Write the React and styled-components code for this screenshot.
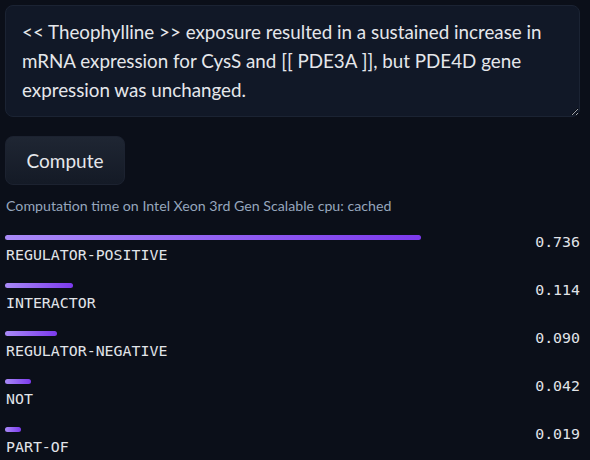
import React from 'react';
import styled, { createGlobalStyle } from 'styled-components';

const GlobalStyle = createGlobalStyle`
  html, body {
    margin: 0;
    padding: 0;
    background: #0b0f19;
  }
  * { box-sizing: border-box; }
`

const Page = styled.div`
  width: 590px;
  height: 460px;
  overflow: hidden;
  padding: 5px 10px 0 5px;
  display: flex;
  flex-direction: column;
  font-family: "Lato", "Noto Sans", sans-serif;
  & > * { flex-shrink: 0; }
`

const TextBox = styled.textarea`
  width: 575px;
  height: 112px;
  background: #111827;
  border: 1px solid #1b2333;
  border-radius: 8px;
  color: #e5e7eb;
  font-family: "Lato", "Noto Sans", sans-serif;
  font-size: 18.8px;
  line-height: 29px;
  padding: 11px 16px;
  outline: none;
  resize: vertical;
`

const ComputeBtn = styled.button`
  margin-top: 19px;
  width: 120px;
  height: 49px;
  border-radius: 8px;
  border: 1px solid #1c2230;
  background: linear-gradient(to bottom, #1f2633, #141a26);
  color: #e5e7eb;
  font-family: "Lato", "Noto Sans", sans-serif;
  font-size: 19px;
  cursor: pointer;
`

const Timing = styled.div`
  margin-top: 12px;
  margin-left: 1px;
  font-size: 14.2px;
  color: #96a6bd;
`

const Results = styled.div`
  margin-top: 21px;
  display: flex;
  flex-direction: column;
`

const Row = styled.div`
  height: 48px;
  display: flex;
  justify-content: space-between;
  align-items: flex-start;
`

const LeftCol = styled.div`
  display: flex;
  flex-direction: column;
`

const Bar = styled.div`
  height: 5px;
  border-radius: 3px;
  background: linear-gradient(to right, #a98af7, #7c3aed);
`

const Mono = styled.div`
  font-family: "DejaVu Sans Mono", "Liberation Mono", monospace;
  font-size: 14.9px;
  color: #e1e4e9;
`

const Label = styled(Mono)`
  margin-top: 6px;
  margin-left: 1px;
`

const Value = styled(Mono)`
  margin-top: -2px;
`

const results = [
  { label: 'REGULATOR-POSITIVE', value: '0.736', width: 416 },
  { label: 'INTERACTOR', value: '0.114', width: 68 },
  { label: 'REGULATOR-NEGATIVE', value: '0.090', width: 52 },
  { label: 'NOT', value: '0.042', width: 26 },
  { label: 'PART-OF', value: '0.019', width: 16 },
]

const App = () => {
  return (
    <Page>
      <GlobalStyle />
      <TextBox
        defaultValue="<< Theophylline >> exposure resulted in a sustained increase in mRNA expression for CysS and [[ PDE3A ]], but PDE4D gene expression was unchanged."
      />
      <div>
        <ComputeBtn>Compute</ComputeBtn>
      </div>
      <Timing>Computation time on Intel Xeon 3rd Gen Scalable cpu: cached</Timing>
      <Results>
        {results.map(r => (
          <Row key={r.label}>
            <LeftCol>
              <Bar style={{ width: r.width }} />
              <Label>{r.label}</Label>
            </LeftCol>
            <Value>{r.value}</Value>
          </Row>
        ))}
      </Results>
    </Page>
  );
};

export default App;
